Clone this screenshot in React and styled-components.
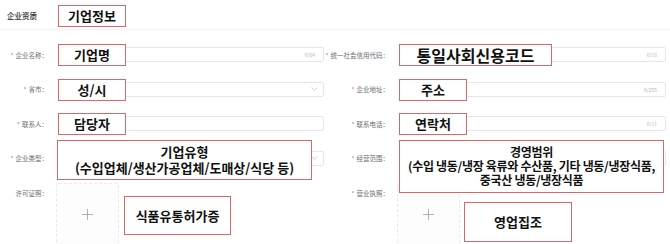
import React from 'react';
import styled, { createGlobalStyle } from 'styled-components';

const Global = createGlobalStyle`
  html, body { margin: 0; padding: 0; background: #fff; }
  body { font-family: "Noto Sans CJK SC", "Noto Sans", sans-serif; }
`;

const Page = styled.div`
  width: 670px;
  height: 244px;
  overflow: hidden;
  background: #fff;
`;

const Header = styled.div`
  display: flex;
  align-items: center;
  height: 30px;
  box-sizing: border-box;
  padding: 2px 0 0 7px;
  border-bottom: 1px solid #f2f3f5;
`;

const Title = styled.div`
  width: 51px;
  font-size: 7.5px;
  font-weight: 500;
  color: #303133;
`;

const Note = styled.div`
  box-sizing: border-box;
  width: ${p => p.$w}px;
  height: ${p => p.$h}px;
  border: 1.5px solid #d9686b;
  background: #fff;
  color: #111;
  font-family: "Noto Sans CJK KR", "Noto Sans", sans-serif;
  font-weight: 700;
  font-size: ${p => p.$size || 13}px;
  letter-spacing: ${p => p.$ls || 0}px;
  line-height: 16px;
  display: flex;
  flex-direction: column;
  align-items: center;
  justify-content: center;
  text-align: center;
  white-space: nowrap;
  z-index: 2;
`;

const Line = styled.div`
  height: ${p => p.$h}px;
  line-height: ${p => p.$h}px;
  overflow: visible;
`;

const Overlay = styled(Note)`
  position: absolute;
  top: ${p => p.$top}px;
  left: ${p => p.$left}px;
`;

const Form = styled.div`
  display: grid;
  grid-template-columns: 58px 266px 75px 267px;
  grid-template-rows: repeat(4, 15px) 62px;
  row-gap: 19.5px;
  margin-top: 17px;
`;

const Label = styled.div`
  display: flex;
  align-items: ${p => (p.$top ? 'flex-start' : 'center')};
  justify-content: flex-end;
  padding-right: 10px;
  padding-top: ${p => (p.$top ? 3 : 0)}px;
  font-size: 6.5px;
  color: #6b6e74;
  white-space: nowrap;
`;

const Star = styled.span`
  color: #f56c6c;
  margin-right: 2px;
`;

const Field = styled.div`
  position: relative;
  box-sizing: border-box;
  height: 15px;
  border: 1px solid #e4e7ed;
  border-radius: 2px;
  background: #fff;
  display: flex;
  align-items: center;
  justify-content: flex-end;
  padding-right: ${p => (p.$select ? 5 : 8)}px;
`;

const Counter = styled.span`
  font-size: 5px;
  color: #b4b7bd;
`;

const Cell = styled.div`
  position: relative;
  margin-top: -2px;
`;

const Upload = styled.div`
  box-sizing: border-box;
  width: 63px;
  height: 63px;
  margin-left: -2px;
  border: 1px dashed #e8eaee;
  border-radius: 3px;
  background: #fdfdfe;
  display: flex;
  align-items: center;
  justify-content: center;
`;

const Chevron = () => (
  <svg width="7" height="4" viewBox="0 0 7 4">
    <path d="M0.5 0.5 L3.5 3.3 L6.5 0.5" fill="none" stroke="#c0c4cc" strokeWidth="0.8" />
  </svg>
);

const Plus = () => (
  <svg width="11" height="11" viewBox="0 0 11 11">
    <path d="M5.5 0 V11 M0 5.5 H11" stroke="#9a9ea6" strokeWidth="0.8" />
  </svg>
);

const Req = ({ children }) => (
  <Label>
    <Star>*</Star>
    {children}
  </Label>
);

export default function App() {
  return (
    <Page>
      <Global />
      <Header>
        <Title>企业资质</Title>
        <Note $w={68} $h={22}>기업정보</Note>
      </Header>
      <Form>
        <Req>企业名称：</Req>
        <Field>
          <Overlay $top={-4} $left={-1} $w={68} $h={22}>기업명</Overlay>
          <Counter>0/64</Counter>
        </Field>
        <Req>统一社会信用代码：</Req>
        <Field>
          <Overlay $top={-4} $left={-1} $w={153} $h={22} $size={16}>통일사회신용코드</Overlay>
          <Counter>0/18</Counter>
        </Field>

        <Req>省市：</Req>
        <Field $select>
          <Overlay $top={-4} $left={-1} $w={68} $h={22}>성/시</Overlay>
          <Chevron />
        </Field>
        <Req>企业地址：</Req>
        <Field>
          <Overlay $top={-4} $left={-1} $w={68} $h={22}>주소</Overlay>
          <Counter>0/255</Counter>
        </Field>

        <Req>联系人：</Req>
        <Field>
          <Overlay $top={-4} $left={-1} $w={68} $h={22}>담당자</Overlay>
        </Field>
        <Req>联系电话：</Req>
        <Field>
          <Overlay $top={-4} $left={-1} $w={68} $h={22}>연락처</Overlay>
          <Counter>0/11</Counter>
        </Field>

        <Req>企业类型：</Req>
        <Field $select>
          <Overlay $top={-12} $left={-2} $w={255} $h={40}>
            <Line $h={16}>기업유형</Line>
            <Line $h={16}>(수입업체/생산가공업체/도매상/식당 등)</Line>
          </Overlay>
          <Chevron />
        </Field>
        <Req>经营范围：</Req>
        <Field>
          <Overlay $top={-12} $left={-1} $w={265} $h={53} $size={12} $ls={-0.3}>
            <Line $h={14}>경영범위</Line>
            <Line $h={14}>(수입 냉동/냉장 육류와 수산품, 기타 냉동/냉장식품,</Line>
            <Line $h={14}>중국산 냉동/냉장식품</Line>
          </Overlay>
        </Field>

        <Label $top>许可证照：</Label>
        <Cell>
          <Upload>
            <Plus />
          </Upload>
          <Overlay $top={13} $left={66} $w={107} $h={39}>식품유통허가증</Overlay>
        </Cell>
        <Label $top>
          <Star>*</Star>营业执照：
        </Label>
        <Cell>
          <Upload>
            <Plus />
          </Upload>
          <Overlay $top={19} $left={65} $w={108} $h={40}>영업집조</Overlay>
        </Cell>
      </Form>
    </Page>
  );
}
